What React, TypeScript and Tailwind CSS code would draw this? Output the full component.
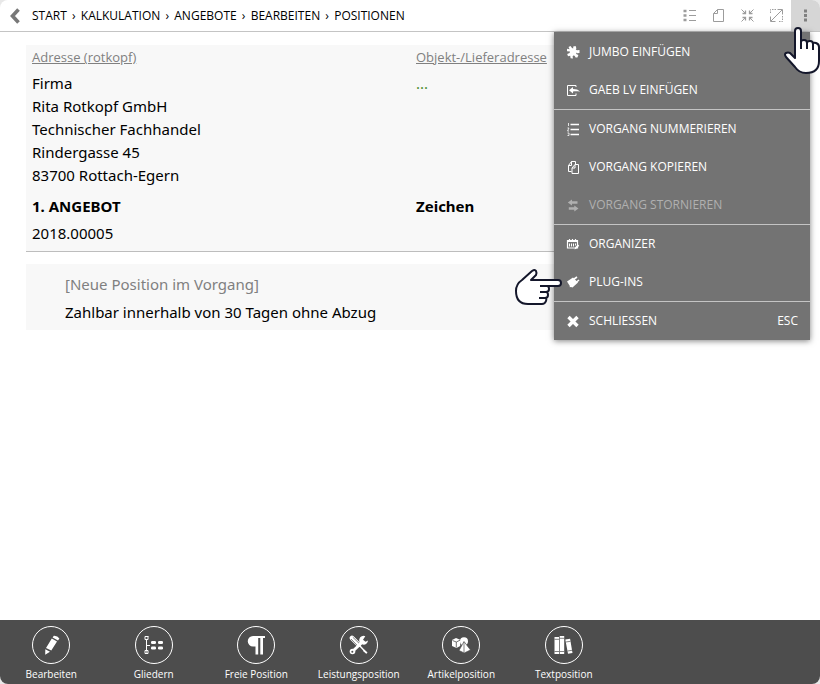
import type { ReactNode } from 'react';

interface MenuEntry {
  label: string;
  icon: ReactNode;
  shortcut?: string;
  disabled?: boolean;
}

interface Action {
  label: string;
  icon: ReactNode;
}

const breadcrumbs = ['START', 'KALKULATION', 'ANGEBOTE', 'BEARBEITEN', 'POSITIONEN'];

const address = [
  'Firma',
  'Rita Rotkopf GmbH',
  'Technischer Fachhandel',
  'Rindergasse 45',
  '83700 Rottach-Egern',
];

const menuSections: MenuEntry[][] = [
  [
    {
      label: 'JUMBO EINFÜGEN',
      icon: (
        <path
          fill="currentColor"
          d="M1.500 1 3.500 0 5 2 6.200 2.600 6.200.6 8.600 0 9.400 2.200 8.800 3.600 10 4.200 12.500 4 12.500 7 10.200 7.200 9.400 6.600 9.200 8 11.400 9 10.400 11.400 8.600 11.600 7.600 9.800 6.200 9.600 5.600 10.600 6 12.600 3.600 12.200 3.200 9.800 1 10.200.2 8 2.600 7 3 5.600 0 5.200 0 2.800 2.600 3.200Z"
        />
      ),
    },
    {
      label: 'GAEB LV EINFÜGEN',
      icon: (
        <>
          <path d="M9 3V1.500H.5v10H9V9.500" fill="none" stroke="currentColor" />
          <path d="M2 6.300 6 3v2c3 0 5.500.6 7 2.800-2.500-.6-4.500-.6-7-.2v2Z" fill="currentColor" />
        </>
      ),
    },
  ],
  [
    {
      label: 'VORGANG NUMMERIEREN',
      icon: (
        <>
          <path d="M3.500 1.500H12M3.500 6.500H12M3.500 11.500H12" stroke="currentColor" strokeWidth="1.400" />
          <path d="M1.500 0v3M.5 5h1.500L.5 8H2M.5 10h1.500v2.500H.5" fill="none" stroke="currentColor" strokeWidth=".8" />
        </>
      ),
    },
    {
      label: 'VORGANG KOPIEREN',
      icon: (
        <path
          d="M4.500 10.500H1.500v-6l3-4h4v3M4.500.5v4h-3M5 7l3-3.500h3.500v9H5ZM8 3.500V7H5"
          fill="none"
          stroke="currentColor"
        />
      ),
    },
    {
      label: 'VORGANG STORNIEREN',
      disabled: true,
      icon: (
        <path
          fill="currentColor"
          d="M.8 3.500 5 .5V2.300H10.500V4.700H5V6.500ZM11.500 9.500 7.300 6.500V8.300H1.800V10.700H7.300V12.500Z"
        />
      ),
    },
  ],
  [
    {
      label: 'ORGANIZER',
      icon: (
        <>
          <path d="M.5 2.500h10V10H.5ZM.5 3.300h10M2.500 1v2M5.500 1v2M8.500 1v2" fill="none" stroke="currentColor" strokeWidth="1.200" />
          <path d="M2.500 5.500v3M4.500 5.500v3M6.500 5.500v3M8.500 5.500v2" stroke="currentColor" />
          <path d="M7.500 11.500 8.300 9 11 6.500l1.200 1.200-2.700 2.900Z" fill="currentColor" />
        </>
      ),
    },
    {
      label: 'PLUG-INS',
      icon: (
        <>
          <path d="M0 5.500 6 1.500 11 6.500 5.500 11.500 4 11 2.800 11.200 2.700 9.800Z" fill="currentColor" />
          <path d="M6.500 3.500 10 1M9 6.500 12 4" stroke="currentColor" strokeWidth="1.600" />
        </>
      ),
    },
  ],
  [
    {
      label: 'SCHLIESSEN',
      shortcut: 'ESC',
      icon: <path d="M1.500 2 10.500 11M10.500 2 1.500 11" stroke="currentColor" strokeWidth="3.400" />,
    },
  ],
];

const actions: Action[] = [
  {
    label: 'Bearbeiten',
    icon: (
      <path
        d="M5 13 10.800 3.600 16 6.600 10.300 15.600ZM11.600 2.600 12.800.8q3.800-.2 5.600 2.800L17 5.600ZM4.300 14.300 9 16.800 4.200 19.800Z"
        fill="currentColor"
      />
    ),
  },
  {
    label: 'Gliedern',
    icon: (
      <>
        <path d="M2.500 4v12M2.500 10.500H6M1 15.500h3v3H1ZM1 1.500h3v3H1Z" fill="none" stroke="currentColor" />
        <path d="M1 1h3.500v1H1ZM2 16.500h1v1H2Z" fill="currentColor" />
        <rect x="7" y="6" width="5" height="3" rx="1.200" fill="currentColor" />
        <rect x="14" y="6" width="5" height="3" rx="1.200" fill="currentColor" />
        <rect x="7" y="11.500" width="5" height="3" rx="1.200" fill="currentColor" />
        <rect x="14" y="11.500" width="5" height="3" rx="1.200" fill="currentColor" />
      </>
    ),
  },
  {
    label: 'Freie Position',
    icon: (
      <path
        fill="currentColor"
        d="M7 1H19V3H17V19.500H14.300V3H12.200V19.500H9.500V11.500H7A5.200 5.200 0 0 1 7 1Z"
      />
    ),
  },
  {
    label: 'Leistungsposition',
    icon: (
      <>
        <path d="M3 3 9.500 9.500" stroke="currentColor" strokeWidth="4.600" strokeLinecap="round" />
        <path d="M2 4 8.800 11M3.800 2.200 10.800 9" stroke="#4d4d4d" strokeWidth=".7" />
        <path d="M10 10 17.500 18" stroke="currentColor" strokeWidth="1.500" />
        <path d="M15 14.500 18.500 17.500 17.500 18.800 14 16Z" fill="currentColor" />
        <path d="M4 16 13 7.500" stroke="currentColor" strokeWidth="3" />
        <circle cx="3.500" cy="16.500" r="2.800" fill="currentColor" />
        <circle cx="3.300" cy="16.700" r="1" fill="#4d4d4d" />
        <path d="M16.300 1.200A4.400 4.400 0 1 0 19 5.500L16.500 6.800 14 4.700Z" fill="currentColor" />
      </>
    ),
  },
  {
    label: 'Artikelposition',
    icon: (
      <>
        <path d="M1 5 5 3 9.200 4.800V11L5.500 13 1 11Z" fill="currentColor" />
        <path d="M1.500 5.500 5.300 7 9 5.200M5.300 7v5.500" fill="none" stroke="#4d4d4d" strokeWidth=".8" />
        <circle cx="13" cy="6.300" r="4" fill="currentColor" />
        <path d="M13 6.500 8 15.500 13.200 18 19.500 15Z" fill="currentColor" stroke="#4d4d4d" strokeWidth=".7" />
        <path d="M13 7v10.500" stroke="#4d4d4d" strokeWidth=".7" />
      </>
    ),
  },
  {
    label: 'Textposition',
    icon: (
      <>
        <path d="M.5 2H5v17H.5ZM5.700 1H10.200v18H5.700ZM11.300 4.500 16.100 3.800 18.500 18 14 18.800Z" fill="currentColor" />
        <path d="M.5 4.300H5M.5 16.500H5M5.700 3.300H10.200M5.700 16.500H10.200M11.800 7 16.500 6.300M13.500 16 18.100 15.300" stroke="#4d4d4d" strokeWidth=".7" />
      </>
    ),
  },
];

function ToolButton({ label, active, children }: { label: string; active?: boolean; children: ReactNode }) {
  return (
    <button
      type="button"
      aria-label={label}
      className={
        active
          ? 'flex h-full w-[29px] items-center justify-center bg-[#d6d6d6] text-[#808080]'
          : 'flex h-full w-[29px] items-center justify-center text-[#9c9c9c]'
      }
    >
      <svg width="13" height="13" viewBox="0 0 13 13" fill="none" stroke="currentColor">
        {children}
      </svg>
    </button>
  );
}

function Header() {
  return (
    <header className="flex h-8 shrink-0 items-center border-b border-[#c4c4c4]">
      <button type="button" aria-label="Zurück" className="flex w-8 justify-center pr-0.5 text-[#787878]">
        <svg width="12" height="16" viewBox="0 0 12 16" fill="none" stroke="currentColor" strokeWidth="3.600">
          <path d="M9.500 1.500 3.500 8l6 6.500" />
        </svg>
      </button>
      <nav aria-label="Pfad" className="flex items-center text-xs text-black">
        {breadcrumbs.map((crumb, index) => (
          <span key={crumb} className="flex">
            {index > 0 && <span className="w-[14px] text-center">›</span>}
            <a href="#">{crumb}</a>
          </span>
        ))}
      </nav>
      <div className="ml-auto flex h-full">
        <ToolButton label="Liste">
          <path d="M.5 2h3M.5 6.500h3M.5 11h3" strokeWidth="2.600" />
          <path d="M6 1.500H13M6 6.500H13M6 11.500H13" />
        </ToolButton>
        <ToolButton label="Dokument">
          <path d="M5.500.5h6v12h-10v-8ZM5.500.5v4h-4" />
        </ToolButton>
        <ToolButton label="Verkleinern">
          <path d="M.5.5 4.500 4.500M12.500.5 8.500 4.500M.5 12.500 4.500 8.500M12.500 12.500 8.500 8.500" />
          <path d="M1.500 4.500h3v-3M11.500 4.500h-3v-3M1.500 8.500h3v3M11.500 8.500h-3v3" strokeWidth="1.300" />
        </ToolButton>
        <ToolButton label="Vollbild">
          <path d="M1 12 12 1M7.500.5h5v5M.5 7.500v5h5" />
          <path d="M.5 4V.5H6M12.500 7v5.500H8" strokeDasharray="1.500 1" />
        </ToolButton>
        <ToolButton label="Menü" active>
          <path d="M5 .5h3v3H5ZM5 5h3v3H5ZM5 9.500h3v3H5Z" fill="currentColor" stroke="none" />
        </ToolButton>
      </div>
    </header>
  );
}

function Menu() {
  return (
    <div
      role="menu"
      className="absolute top-8 right-[10px] w-64 divide-y divide-[#c4c4c4] bg-[#737373] pt-px text-xs text-white shadow-[0_1px_6px_rgba(0,0,0,0.5)]"
    >
      {menuSections.map((section, index) => (
        <div key={index}>
          {section.map(entry => (
            <button
              key={entry.label}
              type="button"
              role="menuitem"
              disabled={entry.disabled}
              className="flex h-[38px] w-full items-center gap-[9px] px-3 text-left disabled:text-[#b0b0b0]"
            >
              <svg width="14" height="14" viewBox="-1 -1 14 14">
                {entry.icon}
              </svg>
              <span>{entry.label}</span>
              {entry.shortcut && <kbd className="ml-auto font-[inherit]">{entry.shortcut}</kbd>}
            </button>
          ))}
        </div>
      ))}
    </div>
  );
}

function Document() {
  return (
    <main className="flex-1 pt-[13px] pr-5 pl-[26px] font-['Noto_Sans',sans-serif]">
      <section className="grid grid-cols-2 border-b border-[#bdbdbd] bg-[#f8f8f8] pl-[6px] text-[15px] leading-[23px] text-black">
        <div>
          <a href="#" className="block h-[27px] font-['Open_Sans',sans-serif] text-[13px] leading-6 text-[#808080] underline">
            Adresse (rotkopf)
          </a>
          <address className="not-italic">
            {address.map(line => (
              <div key={line}>{line}</div>
            ))}
          </address>
          <h1 className="mt-2 font-bold">1. ANGEBOT</h1>
          <p className="mt-1 pb-[6px]">2018.00005</p>
        </div>
        <div>
          <a href="#" className="block h-[27px] font-['Open_Sans',sans-serif] text-[13px] leading-6 text-[#808080] underline">
            Objekt-/Lieferadresse
          </a>
          <p className="h-[115px] text-[#4f8f2f]">...</p>
          <h2 className="mt-2 font-bold">Zeichen</h2>
        </div>
      </section>
      <section className="mt-3 bg-[#f8f8f8] px-[39px] pt-[6px] pb-1 text-[15px] leading-7 text-black">
        <p className="text-[#808080]">[Neue Position im Vorgang]</p>
        <p>Zahlbar innerhalb von 30 Tagen ohne Abzug</p>
      </section>
    </main>
  );
}

function ActionBar() {
  return (
    <footer className="grid h-16 shrink-0 grid-cols-8 bg-[#4d4d4d] text-white">
      {actions.map(action => (
        <button key={action.label} type="button" className="flex flex-col items-center pt-[6px]">
          <span className="flex size-[38px] items-center justify-center rounded-full border border-white">
            <svg width="20" height="20" viewBox="0 0 20 20">
              {action.icon}
            </svg>
          </span>
          <span className="mt-1 text-[10px] leading-3 whitespace-nowrap">{action.label}</span>
        </button>
      ))}
    </footer>
  );
}

function HandPointer({ className }: { className: string }) {
  return (
    <svg
      width="38"
      height="48"
      viewBox="0 0 38 48"
      className={className}
      fill="white"
      stroke="#14172b"
      strokeWidth="2"
      strokeLinejoin="round"
    >
      <path d="M11 28V4q0-3 3-3t3 3v11q0-2 3-2t3 3q0-2 3-2t3 3q0-2 3-1t3 4v14q0 12-13 12-7 0-11-6L2 30q-2-3 0-4t4 0l5 5Z" />
      <path d="M17 14v8M23 15v7M29 17v6" />
    </svg>
  );
}

export default function App() {
  return (
    <div className="min-h-screen bg-[#e8e8e8] font-['Open_Sans','Noto_Sans',sans-serif]">
      <div className="relative flex min-h-screen flex-col overflow-hidden rounded-lg bg-white">
        <Header />
        <Document />
        <ActionBar />
        <Menu />
        <HandPointer className="pointer-events-none absolute top-[27px] right-[-2px]" />
        <HandPointer className="pointer-events-none absolute top-[264px] right-[263px] rotate-90" />
      </div>
    </div>
  );
}
